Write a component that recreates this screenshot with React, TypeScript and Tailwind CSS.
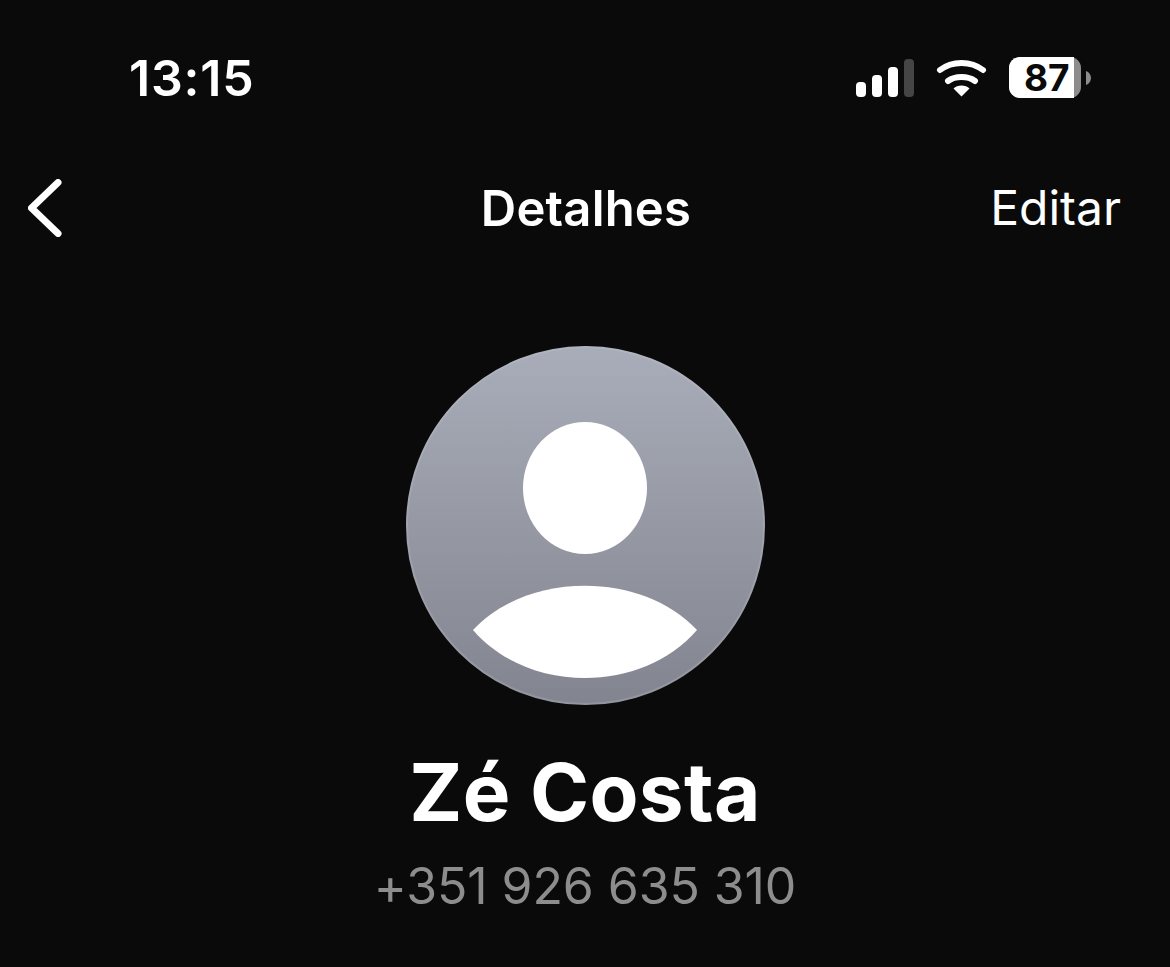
const font = "font-['Inter',sans-serif]"

function SignalBars() {
  return (
    <svg width="58" height="38" viewBox="0 0 58 38" fill="none">
      <rect x="0" y="23" width="10" height="15" rx="4" fill="#fff" />
      <rect x="16" y="16" width="10" height="22" rx="4" fill="#fff" />
      <rect x="32" y="8" width="10" height="30" rx="4" fill="#fff" />
      <rect x="48" y="0" width="10" height="38" rx="4" fill="#454545" />
    </svg>
  )
}

function WifiIcon() {
  return (
    <svg width="51" height="38" viewBox="0 0 51 38" fill="none">
      <path d="M4 11C16 1.500 35 1.500 47 11" stroke="#fff" strokeWidth="6" strokeLinecap="round" />
      <path d="M12 22C19 16.700 32 16.700 39 22" stroke="#fff" strokeWidth="6" strokeLinecap="round" />
      <path d="M25.500 37.500L17.500 29.500C21 25.500 30 25.500 33.500 29.500Z" fill="#fff" />
    </svg>
  )
}

function Battery() {
  return (
    <div className="flex items-center gap-[5px]">
      <div className="flex h-[41px] w-[72px] items-center rounded-[11px] bg-[#8c8c8c]">
        <div className="flex h-full w-[65px] items-center rounded-l-[11px] bg-white pl-[15px]">
          <span className="text-[37px] leading-none font-bold text-[#0a0a0a]">87</span>
        </div>
      </div>
      <svg width="5" height="14" viewBox="0 0 5 14" fill="none">
        <path d="M0 0C3 1 5 4 5 7C5 10 3 13 0 14Z" fill="#8c8c8c" />
      </svg>
    </div>
  )
}

function Avatar() {
  return (
    <svg width="359" height="359" viewBox="0 0 359 359" fill="none">
      <defs>
        <linearGradient id="avatarFill" x1="0" y1="0" x2="0" y2="1">
          <stop offset="0" stopColor="#a9adb9" />
          <stop offset="1" stopColor="#82858f" />
        </linearGradient>
        <linearGradient id="avatarRim" x1="0" y1="0" x2="0" y2="1">
          <stop offset="0" stopColor="#b0b4bf" />
          <stop offset="1" stopColor="#92959e" />
        </linearGradient>
      </defs>
      <circle cx="179.500" cy="179.500" r="178.500" fill="url(#avatarFill)" stroke="url(#avatarRim)" strokeWidth="2" />
      <ellipse cx="179" cy="142" rx="62" ry="66" fill="#fff" />
      <path d="M67 284C122 225 236 225 291 284C236 348 122 348 67 284Z" fill="#fff" />
    </svg>
  )
}

export default function App() {
  return (
    <div className={`h-[967px] w-full overflow-hidden bg-[#0a0a0a] text-white ${font}`}>
      {/* Status bar */}
      <div className="flex h-[108px] items-start justify-between pt-[49px] pr-[79px] pl-[129px]">
        <span className="text-[50px] leading-[58px] font-semibold tracking-[0.8px]">13:15</span>
        <div className="mt-[8px] flex items-center gap-[22px]">
          <SignalBars />
          <WifiIcon />
          <Battery />
        </div>
      </div>

      {/* Nav */}
      <div className="mt-[71px] grid h-[58px] grid-cols-[1fr_auto_1fr] items-center pr-[49px] pl-[51px]">
        <svg className="-ml-[23px]" width="34" height="58" viewBox="0 0 34 58" fill="none">
          <path d="M30 3.500L3.500 29L30 54.500" stroke="#fff" strokeWidth="7" strokeLinecap="round" strokeLinejoin="round" />
        </svg>
        <span className="text-[49px] leading-none font-semibold tracking-[0.2px]">Detalhes</span>
        <span className="justify-self-end text-[48px] leading-none font-normal">Editar</span>
      </div>

      {/* Contact */}
      <div className="mt-[109px] flex flex-col items-center">
        <Avatar />
        <h1 className="mt-[43px] text-[80px] leading-[88px] font-bold tracking-[0.3px]">Zé Costa</h1>
        <p className="mt-[21px] text-[50px] leading-[58px] tracking-[-0.1px] text-[#8d8d8d]">+351 926 635 310</p>
      </div>
    </div>
  )
}
